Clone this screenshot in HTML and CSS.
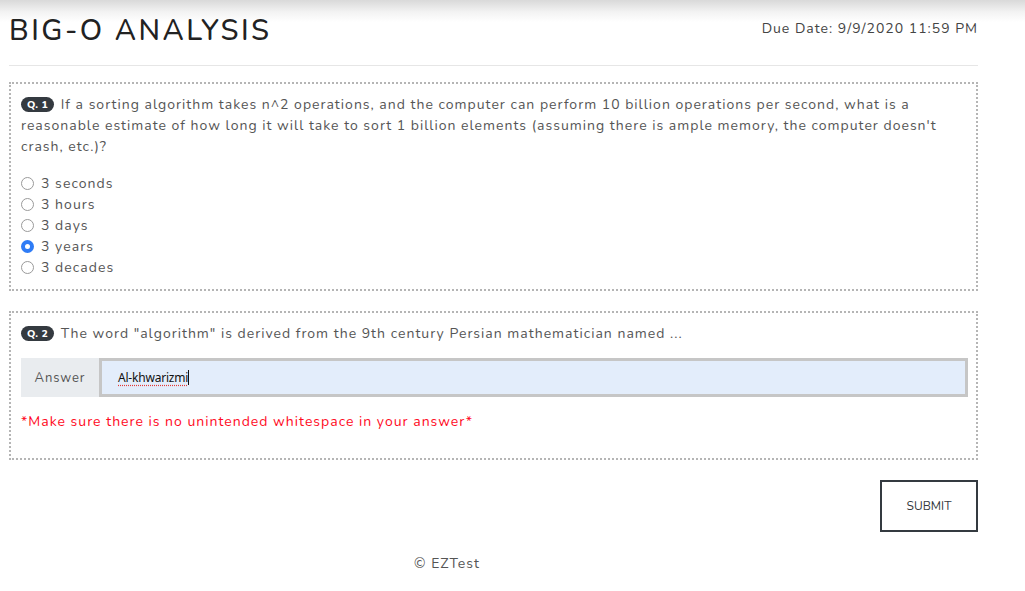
FILE: index.html
```html
<!DOCTYPE html>
<html>
<head>
<meta charset="utf-8">
<link rel="stylesheet" href="styles.css">
</head>
<body>
<div class="topshade"></div>
<div class="page">
  <header class="header">
    <h1 class="title">BIG-O ANALYSIS</h1>
    <div class="due">Due Date: 9/9/2020 11:59 PM</div>
  </header>
  <hr class="rule">

  <section class="qbox q1">
    <p class="qtext"><span class="badge">Q. 1</span> If a sorting algorithm takes n^2 operations, and the computer can perform 10 billion operations per second, what is a reasonable estimate of how long it will take to sort 1 billion elements (assuming there is ample memory, the computer doesn't crash, etc.)?</p>
    <ul class="options">
      <li><span class="radio"></span>3 seconds</li>
      <li><span class="radio"></span>3 hours</li>
      <li><span class="radio"></span>3 days</li>
      <li><span class="radio checked"></span>3 years</li>
      <li><span class="radio"></span>3 decades</li>
    </ul>
  </section>

  <section class="qbox q2">
    <p class="qtext"><span class="badge">Q. 2</span> The word "algorithm" is derived from the 9th century Persian mathematician named ...</p>
    <div class="input-group">
      <span class="addon">Answer</span>
      <div class="input"><span class="typed">Al-khwarizmi</span><span class="caret"></span></div>
    </div>
    <p class="warn">*Make sure there is no unintended whitespace in your answer*</p>
  </section>

  <div class="actions">
    <button class="submit">SUBMIT</button>
  </div>

  <footer class="footer">© EZTest</footer>
</div>
</body>
</html>
```

FILE: styles.css
```css
* { box-sizing: border-box; }
html, body { margin: 0; padding: 0; background: #fff; }
body {
  font-family: "Nunito", "Lato", "Noto Sans", sans-serif;
  color: #555;
  position: relative;
}
.topshade {
  position: absolute;
  left: 0; right: 0; top: 0;
  height: 22px;
  background: linear-gradient(to bottom, #d9d9d9 0%, #f3f3f3 55%, #ffffff 100%);
}
.page {
  position: relative;
  width: 969px;
  margin-left: 9px;
}
.header {
  display: flex;
  justify-content: space-between;
  align-items: flex-start;
  height: 65px;
}
.title {
  margin: 15px 0 0 0;
  font-size: 29px;
  font-weight: 500;
  letter-spacing: 2.5px;
  color: #222;
  line-height: 32px;
}
.due {
  margin-top: 20px;
  font-size: 14px;
  letter-spacing: 1px;
  color: #444;
  line-height: 18px;
}
.rule {
  margin: 0;
  border: 0;
  border-top: 1px solid #e6e6e6;
}
.qbox {
  border: 2px dotted #b5b5b5;
  padding: 10px 10px 10px 10px;
}
.q1 { margin-top: 16px; height: 209px; }
.q2 { margin-top: 20px; height: 149px; padding-top: 10px; }
.qtext {
  margin: 0;
  font-size: 14px;
  line-height: 21px;
  letter-spacing: 1px;
  color: #555;
}
.badge {
  display: inline-block;
  background: #343a40;
  color: #fff;
  font-size: 10.5px;
  font-weight: 800;
  letter-spacing: 0.3px;
  line-height: 15px;
  padding: 0 6px;
  border-radius: 8px;
  vertical-align: 1px;
  margin-right: 2px;
}
.options {
  list-style: none;
  margin: 16px 0 0 0;
  padding: 0;
}
.options li {
  display: flex;
  align-items: center;
  height: 21px;
  font-size: 14px;
  letter-spacing: 1.05px;
  color: #555;
}
.radio {
  width: 13px;
  height: 13px;
  border: 1px solid #9a9a9a;
  border-radius: 50%;
  margin-right: 7px;
  background: #fff;
  flex: none;
}
.radio.checked {
  border: 4px solid #2f7cf6;
  background: #fff;
}
.input-group {
  display: flex;
  margin-top: 14px;
  height: 39px;
  width: 947px;
}
.addon {
  width: 78px;
  background: #e9ecef;
  display: flex;
  align-items: center;
  justify-content: center;
  font-size: 13px;
  letter-spacing: 0.9px;
  color: #555;
}
.input {
  flex: 1;
  background: #e3edfb;
  border: 3px solid #c6c6c6;
  display: flex;
  align-items: center;
  padding-left: 16px;
  font-family: "Noto Sans", "Lato", sans-serif;
  font-size: 12px;
  color: #111;
}
.typed {
  text-decoration: underline dotted #e53935;
  text-underline-offset: 3px;
  letter-spacing: -0.2px;
}
.caret {
  display: inline-block;
  width: 1px;
  height: 15px;
  background: #111;
}
.warn {
  margin: 16px 0 0 0;
  font-size: 14px;
  letter-spacing: 1px;
  color: #ff0a1e;
  line-height: 18px;
}
.actions {
  display: flex;
  justify-content: flex-end;
  margin-top: 20px;
}
.submit {
  width: 98px;
  height: 52px;
  background: #fff;
  border: 2px solid #343a40;
  font-family: "Nunito", "Lato", sans-serif;
  font-size: 12px;
  color: #343a40;
  padding: 0;
}
.footer {
  margin-top: 22px;
  width: 876px;
  text-align: center;
  font-size: 14px;
  letter-spacing: 1px;
  color: #555;
}
```
